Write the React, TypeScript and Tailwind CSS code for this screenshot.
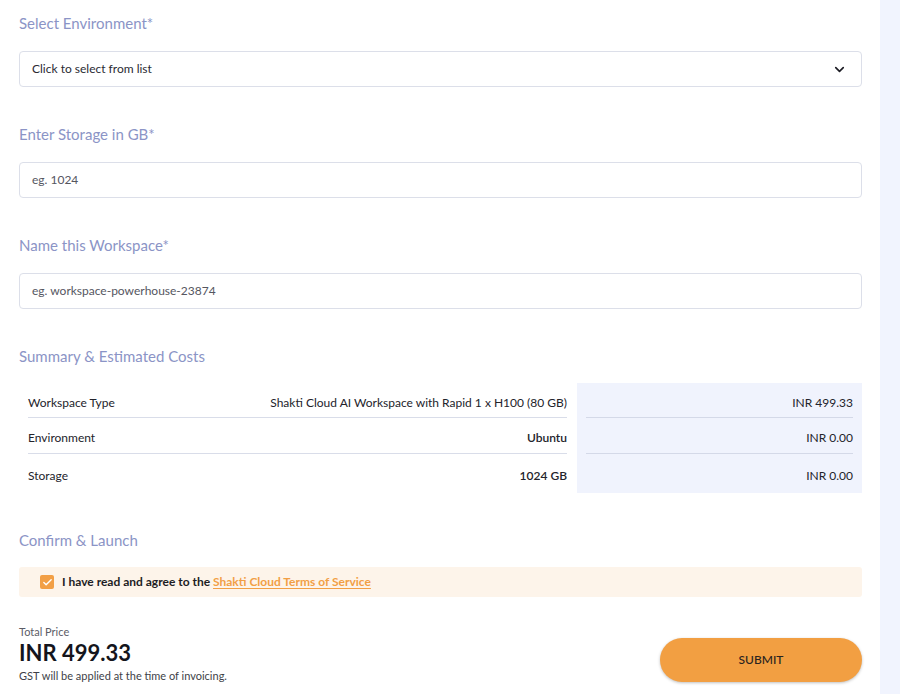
import { ChevronDown, Check } from "lucide-react";

const rows = [
  { label: "Workspace Type", value: "Shakti Cloud AI Workspace with Rapid 1 x H100 (80 GB)", cost: "INR 499.33", bold: false, h: "h-[35px] border-b" },
  { label: "Environment", value: "Ubuntu", cost: "INR 0.00", bold: true, h: "h-[36px] border-b" },
  { label: "Storage", value: "1024 GB", cost: "INR 0.00", bold: true, h: "h-[39px]" },
];

function Label({ children }: { children: React.ReactNode }) {
  return <div className="text-[15px] leading-5 text-[#8b94c6] h-5">{children}</div>;
}

export default function App() {
  return (
    <div className="flex w-[900px] h-[694px] bg-white overflow-hidden" style={{ fontFamily: "Lato, 'Noto Sans', sans-serif" }}>
      <div className="w-[880px] pl-[19px] pr-[18px] pt-[13px] flex flex-col">
        {/* environment */}
        <Label>Select Environment*</Label>
        <div className="mt-[18px] h-[36px] border border-[#dcdfe9] rounded-[4px] flex items-center justify-between pl-3 pr-[14px] text-[12px] text-[#2a2a33]">
          <span>Click to select from list</span>
          <ChevronDown size={15} strokeWidth={2.6} className="text-[#1c1c24]" />
        </div>

        {/* storage */}
        <div className="mt-[37px]">
          <Label>Enter Storage in GB*</Label>
        </div>
        <div className="mt-[18px] h-[36px] border border-[#dcdfe9] rounded-[4px] flex items-center pl-3 text-[12px] text-[#55565f]">
          eg. 1024
        </div>

        {/* name */}
        <div className="mt-[37px]">
          <Label>Name this Workspace*</Label>
        </div>
        <div className="mt-[18px] h-[36px] border border-[#dcdfe9] rounded-[4px] flex items-center pl-3 text-[12px] text-[#55565f]">
          eg. workspace-powerhouse-23874
        </div>

        {/* summary */}
        <div className="mt-[37px]">
          <Label>Summary &amp; Estimated Costs</Label>
        </div>
        <div className="mt-[17px] flex text-[12px] text-[#23232b]">
          <div className="flex-1 pl-[9px]">
            {rows.map((r) => (
              <div key={r.label} className={`flex items-center justify-between pt-[5px] border-[#d9dde9] ${r.h}`}>
                <span>{r.label}</span>
                <span className={r.bold ? "font-semibold" : ""}>{r.value}</span>
              </div>
            ))}
          </div>
          <div className="w-[285px] ml-[10px] bg-[#f0f3fd] px-[9px]">
            {rows.map((r) => (
              <div key={r.label} className={`flex items-center justify-end pt-[5px] border-[#d4d9e8] ${r.h}`}>
                {r.cost}
              </div>
            ))}
          </div>
        </div>

        {/* confirm */}
        <div className="mt-[37px]">
          <Label>Confirm &amp; Launch</Label>
        </div>
        <div className="mt-[17px] h-[30px] bg-[#fdf4ea] rounded-[3px] flex items-center pl-[21px] text-[12px] font-bold text-[#1d1d24]">
          <span className="w-[14px] h-[14px] bg-[#f29f45] rounded-[2px] flex items-center justify-center mr-[8px]">
            <Check size={11} strokeWidth={3} className="text-white" />
          </span>
          <span>
            I have read and agree to the{" "}
            <span className="text-[#f29f45] underline underline-offset-2">Shakti Cloud Terms of Service</span>
          </span>
        </div>

        {/* total */}
        <div className="mt-[28px] flex items-start justify-between">
          <div>
            <div className="text-[11px] leading-[14px] text-[#5b5c66]">Total Price</div>
            <div className="text-[22px] leading-[28px] font-bold text-[#14151c]">INR 499.33</div>
            <div className="text-[11px] leading-[16px] mt-[1px] text-[#3e3f48]">GST will be applied at the time of invoicing.</div>
          </div>
          <button className="mt-[13px] w-[202px] h-[44px] rounded-full bg-[#f29f42] text-[12px] font-medium text-[#2a2320] shadow-[0_1px_3px_rgba(0,0,0,0.25)]">
            SUBMIT
          </button>
        </div>
      </div>
      <div className="w-[20px] bg-[#f1f4fe]" />
    </div>
  );
}
